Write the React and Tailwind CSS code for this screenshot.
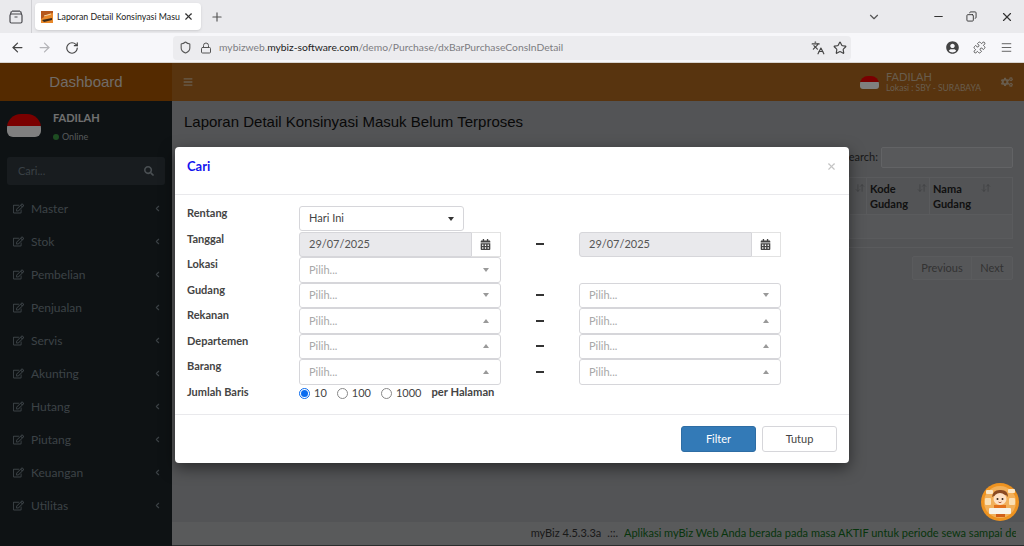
import React from 'react'
import { ArrowLeft, ArrowRight, RotateCw, Shield, Lock, Languages, Star, Puzzle, Menu, ChevronDown, Minus, Copy, X, Plus, ChevronLeft, ArrowDownUp } from 'lucide-react'
import { FaRegEdit, FaSearch, FaBars, FaCogs, FaCalendarAlt, FaUserCircle } from 'react-icons/fa'

const MENU = ['Master', 'Stok', 'Pembelian', 'Penjualan', 'Servis', 'Akunting', 'Hutang', 'Piutang', 'Keuangan', 'Utilitas']

const nunito = { fontFamily: 'Lato, "Open Sans", sans-serif' }

// bendera bulat di profil
const Flag = ({ className }) => (
  <div className={`overflow-hidden flex flex-col ${className}`}>
    <div className="flex-1 bg-[#f40000]" />
    <div className="flex-1 bg-white" />
  </div>
)

const TabArchive = () => (
  <svg width="14" height="14" viewBox="0 0 14 14" fill="none" stroke="#4a4a4f" strokeWidth="1.2">
    <rect x="1" y="4" width="12" height="9" rx="1.5" />
    <path d="M3 1.2h8M1.5 4l1-2.8M12.5 4l-1-2.8M5.5 7h3" />
  </svg>
)

const Favicon = () => (
  <svg width="12" height="12" viewBox="0 0 12 12" className="shrink-0">
    <rect width="12" height="12" fill="#e8882a" />
    <path d="M0 8 L8 3 L12 2 L12 0 L0 0Z" fill="#b5561a" />
    <path d="M1 9 L11 7 L11 9 L3 11Z" fill="#3c2a1a" />
    <path d="M3 5 L10 3" stroke="#f7d9a8" strokeWidth="1" />
  </svg>
)

const BrowserChrome = () => (
  <div className="shrink-0" style={nunito}>
    <div className="h-[33px] bg-[#eaeaed] flex items-center">
      <div className="w-[32px] h-full flex items-center justify-center border-r border-[#d0d0d4]">
        <TabArchive />
      </div>
      <div className="ml-[3px] w-[166px] h-[27px] bg-white rounded-[4px] shadow-sm flex items-center pl-[6px] pr-[7px] gap-[4px]">
        <Favicon />
        <span className="flex-1 min-w-0 text-[8.8px] text-[#222] whitespace-nowrap">Laporan Detail Konsinyasi Masu</span>
        <X size={11} strokeWidth={2.5} className="text-[#333] shrink-0" />
      </div>
      <Plus size={14} className="ml-[9px] text-[#555]" />
      <div className="flex-1" />
      <ChevronDown size={14} className="text-[#555] mr-[51px]" />
      <Minus size={13} className="text-[#333] mr-[21px]" />
      <Copy size={11} className="text-[#333] mr-[23px] -scale-x-100" />
      <X size={14} className="text-[#333] mr-[10px]" />
    </div>
    <div className="h-[30px] bg-[#f7f7fa] flex items-center border-b border-[#d8d4d0]">
      <ArrowLeft size={15} className="ml-[10px] text-[#444]" />
      <ArrowRight size={15} className="ml-[12px] text-[#b4b4b8]" />
      <RotateCw size={14} className="ml-[13px] text-[#444]" />
      <div className="ml-[94px] w-[678px] h-[24px] bg-[#ececef] rounded-[4px] flex items-center pl-[6px]">
        <Shield size={13} className="text-[#555]" />
        <Lock size={12} className="ml-[8px] text-[#555]" />
        <span className="ml-[7px] flex-1 text-[10.3px] text-[#7d7d82] whitespace-nowrap">
          mybizweb.<span className="text-[#222]">mybiz-software.com</span>/demo/Purchase/dxBarPurchaseConsInDetail
        </span>
        <Languages size={14} className="text-[#444]" />
        <Star size={14} className="ml-[8px] mr-[4px] text-[#444]" />
      </div>
      <FaUserCircle size={13} className="ml-[95px] text-[#444]" />
      <Puzzle size={13} strokeWidth={1.5} className="ml-[14px] text-[#444]" />
      <Menu size={13} strokeWidth={1.5} className="ml-[14px] text-[#444]" />
    </div>
  </div>
)

const Sidebar = () => (
  <div className="w-[172px] shrink-0 bg-[#1c2529] flex flex-col" style={nunito}>
    <div className="h-[48px] flex pl-[7px] pt-[13px] shrink-0">
      <Flag className="w-[34px] h-[23px] rounded-t-[14px] rounded-b-[6px]" />
      <div className="ml-[12px] text-[#e0e0e0]">
        <div className="text-[11px] font-bold leading-[11px] mt-[-2px]">FADILAH</div>
        <div className="flex items-center gap-[3px] mt-[9px] text-[9px] leading-[9px] text-[#aab0b4]">
          <span className="w-[6px] h-[6px] rounded-full bg-[#3c9a45]" />
          Online
        </div>
      </div>
    </div>
    <div className="mx-[7px] mt-[8px] h-[28px] bg-[#30393f] rounded-[3px] flex items-center px-[11px] justify-between shrink-0">
      <span className="text-[11px] text-[#74808a]">Cari...</span>
      <FaSearch size={10} className="text-[#949ea5]" />
    </div>
    <div className="mt-[7px] flex flex-col">
      {MENU.map((item) => (
        <div key={item} className="h-[33px] flex items-center pl-[13px] pr-[10px] text-[#78848c]">
          <FaRegEdit size={11} />
          <span className="ml-[7px] flex-1 text-[12px]">{item}</span>
          <ChevronLeft size={9} strokeWidth={3} />
        </div>
      ))}
    </div>
  </div>
)

const Content = () => (
  <div className="flex-1 min-w-0 flex flex-col bg-[#a6a8ac] relative">
    <div className="h-[38px] shrink-0 bg-[#b0681e] flex items-center pl-[11px] pr-[11px] text-[#d0b89a]">
      <FaBars size={10} />
      <div className="flex-1" />
      <Flag className="w-[19px] h-[13px] rounded-t-[8px] rounded-b-[3px]" />
      <div className="ml-[7px] w-[115px]" style={nunito}>
        <div className="text-[11px] leading-[12px] mb-[1px]">FADILAH</div>
        <div className="text-[8.5px] leading-[9px] whitespace-nowrap">Lokasi : SBY - SURABAYA</div>
      </div>
      <FaCogs size={12} />
    </div>
    <div className="pl-[12px] pt-[11px]" style={{ fontFamily: '"Liberation Sans", sans-serif' }}>
      <h1 className="text-[15px] leading-[20px] text-[#111]">Laporan Detail Konsinyasi Masuk Belum Terproses</h1>
    </div>
    <div className="flex justify-end items-center pr-[11px] mt-[15px] gap-[3px] text-[11px] text-[#333]" style={nunito}>
      <span>Search:</span>
      <div className="w-[132px] h-[21px] bg-[#b0b2b6] border border-[#c4c6ca] rounded-[2px]" />
    </div>
    <div className="ml-auto mr-[11px] mt-[9px] w-[164px] flex flex-col border-b border-[#b4b6ba] h-[71px]" style={nunito}>
      <div className="h-[38px] flex border border-[#b4b6ba] text-[11px] font-bold text-[#222] leading-[15px]">
        <div className="w-[17px] border-r border-[#b4b6ba] flex justify-end pr-[1px] pt-[5px]">
          <ArrowDownUp size={10} className="text-[#808285]" />
        </div>
        <div className="w-[63px] pl-[3px] pt-[3px] border-r border-[#b4b6ba] flex">
          <span className="w-[40px]">Kode Gudang</span>
          <ArrowDownUp size={10} className="text-[#808285] shrink-0 mt-[2px] ml-[7px]" />
        </div>
        <div className="flex-1 pl-[3px] pt-[3px] flex">
          <span className="w-[40px]">Nama Gudang</span>
          <ArrowDownUp size={10} className="text-[#808285] shrink-0 mt-[2px] ml-[8px]" />
        </div>
      </div>
      <div className="h-[24px] bg-[#acaeb2] border border-t-0 border-[#b4b6ba]" />
    </div>
    <div className="ml-auto mr-[11px] mt-[8px] flex text-[11px] text-[#666] border border-[#b4b6ba] bg-[#adafb3] rounded-[2px] h-[24px] items-center" style={nunito}>
      <span className="w-[59px] justify-center border-r border-[#b4b6ba] h-full flex items-center">Previous</span>
      <span className="w-[40px] justify-center h-full flex items-center">Next</span>
    </div>
    <div className="mt-auto h-[24px] bg-[#b2b4b6] border-b border-[#55585a] flex items-center justify-end pr-[8px] text-[11px] whitespace-nowrap overflow-hidden" style={nunito}>
      <span className="text-[#333]">myBiz 4.5.3.3a</span>
      <span className="mx-[6px] text-[#333]">.::.</span>
      <span className="text-[#0f6a18] w-[392px] overflow-hidden">Aplikasi myBiz Web Anda berada pada masa AKTIF untuk periode sewa sampai dengan</span>
    </div>
  </div>
)

const Caret = ({ up, dark }) => (
  <span className={`w-0 h-0 border-x-[3.5px] border-x-transparent ${up ? 'border-b-[4px]' : 'border-t-[4px]'} ${dark ? 'border-t-[#333] border-b-[#333]' : 'border-t-[#999] border-b-[#999]'}`} />
)

const Pilih = ({ up }) => (
  <div className="w-[201.5px] h-[25.5px] shrink-0 bg-white border border-[#d6d6da] rounded-[3px] flex items-center pl-[9px] pr-[11px] justify-between">
    <span className="text-[11px] text-[#a8a8a8]">Pilih...</span>
    <Caret up={up} />
  </div>
)

const DateInput = () => (
  <div className="w-[201.5px] h-[25.5px] shrink-0 flex">
    <div className="flex-1 bg-[#e9e9ec] border border-[#d6d6da] rounded-l-[3px] flex items-center pl-[9px] text-[11px] text-[#555]">29/07/2025</div>
    <div className="w-[29px] bg-white border border-l-0 border-[#e2e2e2] flex items-center justify-center text-[#444]">
      <FaCalendarAlt size={11} />
    </div>
  </div>
)

const Dash = () => (
  <div className="w-[78.5px] shrink-0 flex items-center justify-center">
    <div className="w-[8px] h-[2px] bg-[#333]" />
  </div>
)

const Row = ({ label, children }) => (
  <div className="flex h-[25.5px]">
    <div className="w-[112px] shrink-0 text-[11px] font-bold text-[#444] leading-[13px]">{label}</div>
    {children}
  </div>
)

const Radio = ({ label, checked }) => (
  <label className="flex items-center gap-[4px] mr-[10px]">
    <span className={`w-[11px] h-[11px] rounded-full border flex items-center justify-center ${checked ? 'border-[#0a6cf0]' : 'border-[#888]'}`}>
      {checked && <span className="w-[7px] h-[7px] rounded-full bg-[#0a6cf0]" />}
    </span>
    <span className="text-[11px] text-[#444]">{label}</span>
  </label>
)

const Modal = () => (
  <div className="absolute inset-0 bg-black/50" style={nunito}>
    <div className="absolute left-[175px] top-[84px] w-[674px] h-[316px] bg-white rounded-[4px] shadow-[0_5px_15px_rgba(0,0,0,0.5)] flex flex-col">
      <div className="h-[48px] shrink-0 border-b border-[#e9e9ec] flex justify-between px-[12px] pt-[12px]">
        <h4 className="text-[13px] font-bold text-[#1414ee] leading-[14px]">Cari</h4>
        <X size={11} strokeWidth={2.5} className="text-[#c4c4c4] mt-[2px]" />
      </div>
      <div className="flex-1 pl-[12px] pt-[11px]">
        <div className="flex h-[25.5px]">
          <div className="w-[112px] shrink-0 text-[11px] font-bold text-[#444] leading-[14px]">Rentang</div>
          <div className="w-[165px] h-[25px] bg-white border border-[#d6d6da] rounded-[3px] flex items-center justify-between pl-[9px] pr-[9px]">
            <span className="text-[11px] text-[#444]">Hari Ini</span>
            <Caret dark />
          </div>
        </div>
        <Row label="Tanggal"><DateInput /><Dash /><DateInput /></Row>
        <Row label="Lokasi"><Pilih /></Row>
        <Row label="Gudang"><Pilih /><Dash /><Pilih /></Row>
        <Row label="Rekanan"><Pilih up /><Dash /><Pilih up /></Row>
        <Row label="Departemen"><Pilih up /><Dash /><Pilih up /></Row>
        <Row label="Barang"><Pilih up /><Dash /><Pilih up /></Row>
        <div className="flex">
          <div className="w-[112px] shrink-0 text-[11px] font-bold text-[#444] leading-[14px]">Jumlah Baris</div>
          <div className="flex items-center h-[14px] mt-[2px]">
            <Radio label="10" checked />
            <Radio label="100" />
            <Radio label="1000" />
            <span className="text-[11.2px] font-bold text-[#444] -mt-[2px]">per Halaman</span>
          </div>
        </div>
      </div>
      <div className="h-[49px] shrink-0 border-t border-[#e9e9ec] flex justify-end items-start pt-[11px] pr-[12px] gap-[6px]">
        <button className="w-[75px] h-[26px] bg-[#337ab7] border border-[#2e6da4] rounded-[3px] text-[11px] text-white">Filter</button>
        <button className="w-[75px] h-[26px] bg-white border border-[#d6d6da] rounded-[3px] text-[11px] text-[#444]">Tutup</button>
      </div>
    </div>
  </div>
)

// maskot bulat di pojok kanan bawah
const Mascot = () => (
  <svg width="38" height="38" viewBox="0 0 38 38" className="absolute right-[5px] top-[483px] z-10">
    <circle cx="19" cy="19" r="19" fill="#ee9320" />
    <circle cx="19" cy="19" r="16" fill="#f2b05a" />
    <rect x="5" y="7" width="7" height="4" rx="1" fill="#fbe6c4" />
    <rect x="27" y="6" width="7" height="4" rx="1" fill="#fbe6c4" />
    <rect x="4" y="15" width="6" height="7" rx="1" fill="#fbe0b4" />
    <rect x="28" y="15" width="6" height="7" rx="1" fill="#fbe0b4" />
    <path d="M11 14 Q12 6 20 7 Q27 7 27 14 L25 12 L13 13Z" fill="#8a4a22" />
    <ellipse cx="19" cy="16" rx="6.5" ry="6" fill="#fde0c4" />
    <circle cx="16.5" cy="16" r="1" fill="#33231a" />
    <circle cx="21.5" cy="16" r="1" fill="#33231a" />
    <path d="M17.5 19 Q19 20.5 20.5 19" stroke="#a03a20" strokeWidth="0.8" fill="none" />
    <rect x="13" y="22" width="12" height="6" fill="#e2701c" />
    <rect x="8" y="25" width="22" height="6" rx="1" fill="#f7f3ea" />
    <rect x="15" y="31" width="9" height="3" fill="#d05f18" />
  </svg>
)

export default function App() {
  return (
    <div className="w-full h-[546px] overflow-hidden flex flex-col relative">
      <BrowserChrome />
      <div className="flex-1 min-h-0 relative flex flex-col">
        <div className="flex-1 min-h-0 flex">
          <div className="w-[172px] shrink-0 flex flex-col">
            <div className="h-[38px] shrink-0 bg-[#a85400] flex items-center justify-center text-[#e0d8d0] text-[15px]" style={{ fontFamily: '"Liberation Sans", sans-serif' }}>Dashboard</div>
            <div className="flex-1 min-h-0 flex"><Sidebar /></div>
          </div>
          <Content />
        </div>
        <Modal />
      </div>
      <Mascot />
    </div>
  )
}
